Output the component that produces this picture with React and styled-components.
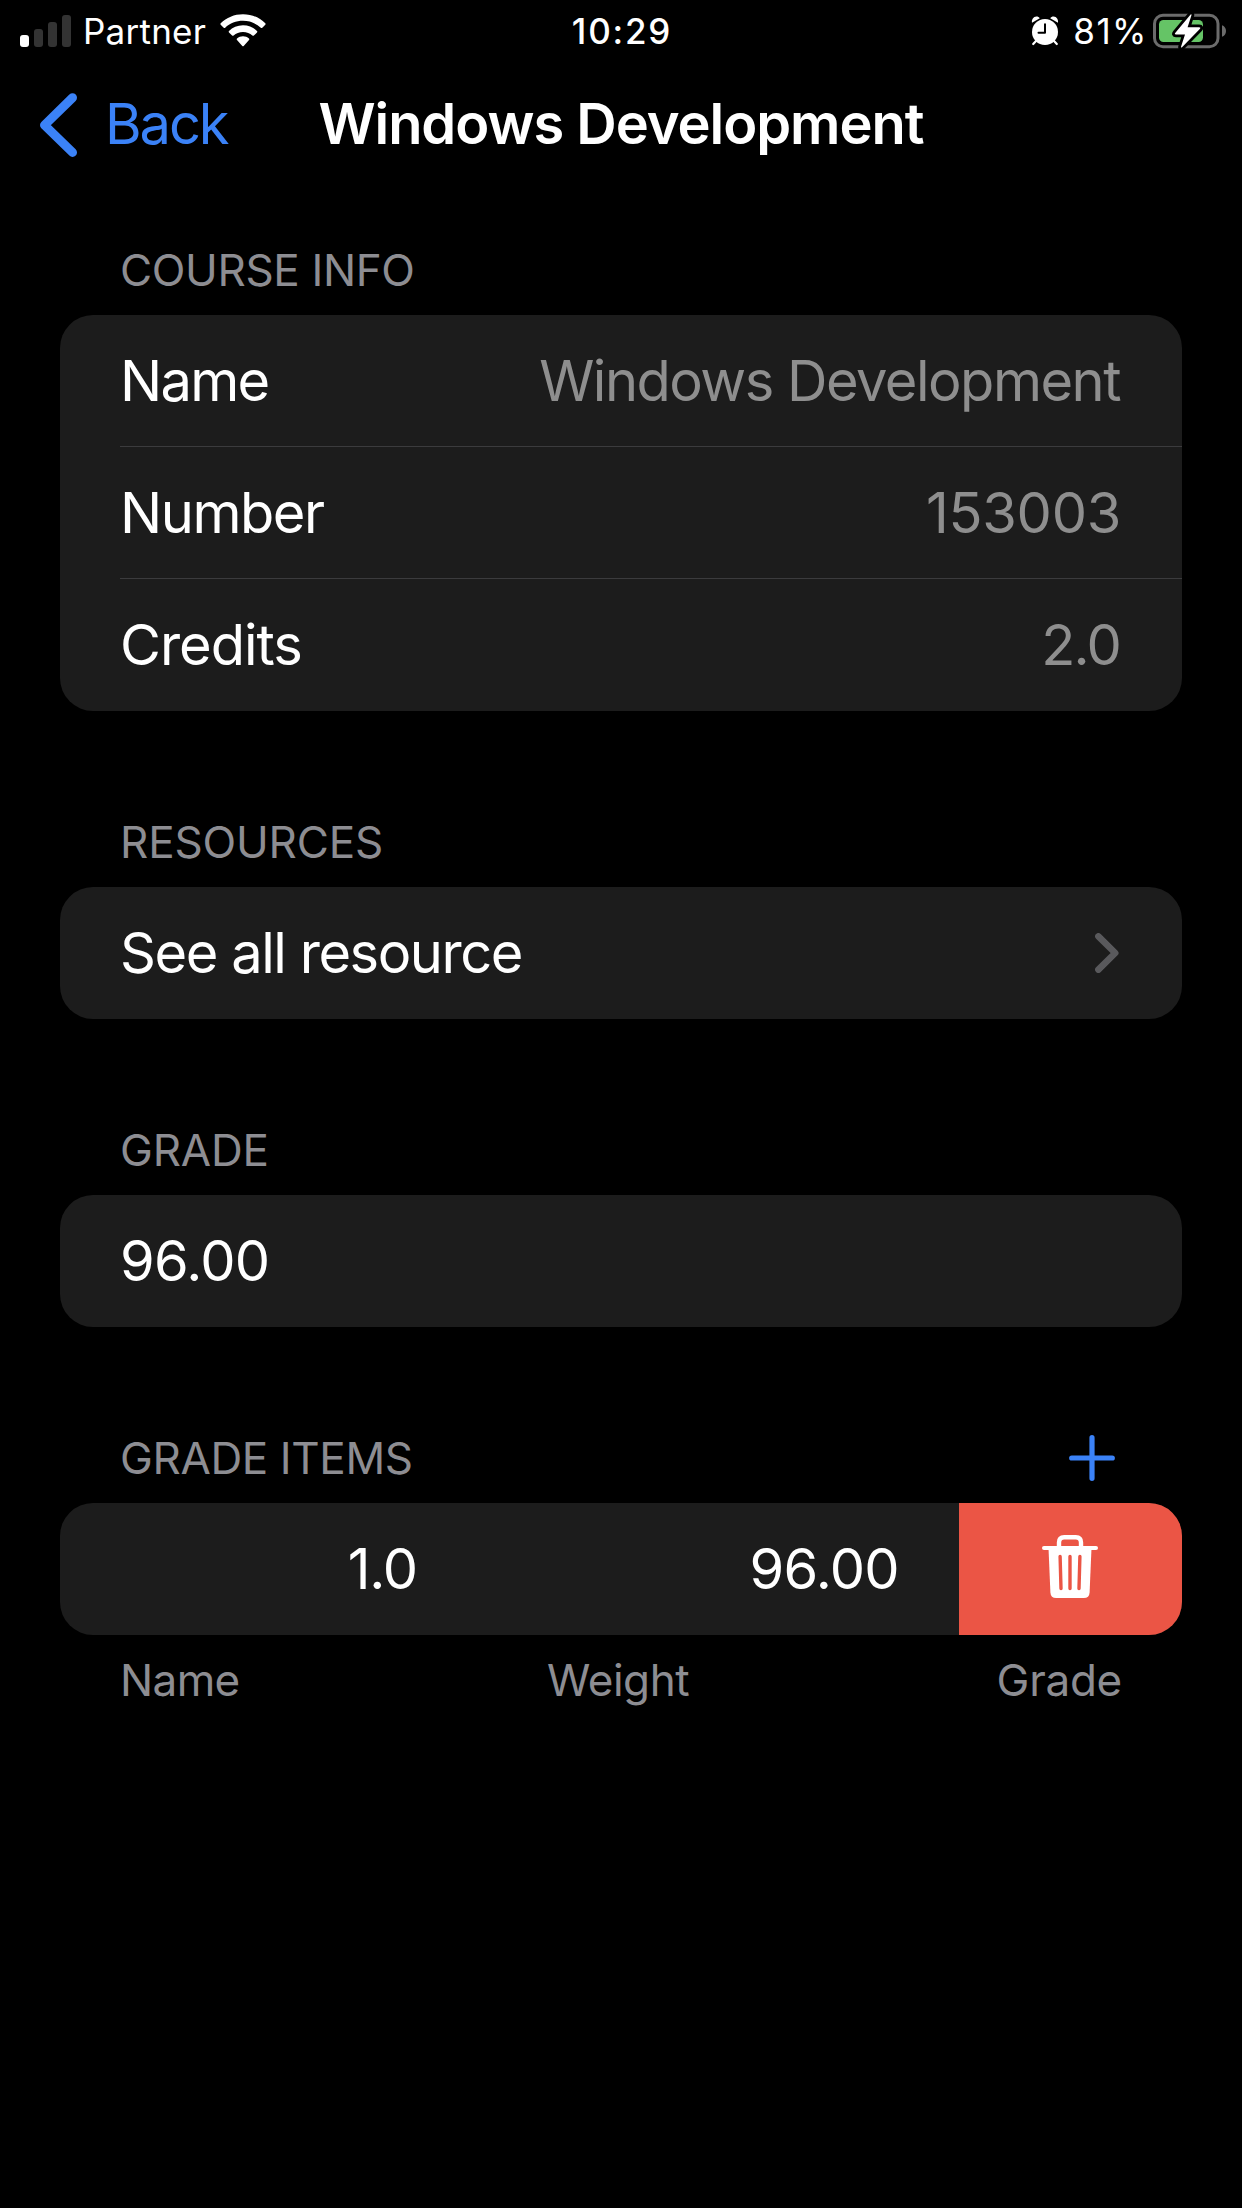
import React from 'react';
import styled, { createGlobalStyle } from 'styled-components';

const color = {
  background: '#000',
  card: '#1c1c1c',
  label: '#fff',
  value: '#8e8e8e',
  secondary: '#8d8d92',
  separator: '#3b3b3d',
  tint: '#3b82f7',
  destructive: '#eb5545',
  battery: '#65c466',
};

const GlobalStyle = createGlobalStyle`
  html, body { margin: 0; background: ${color.background}; }
  *, *::before, *::after { box-sizing: border-box; }
`;

const Screen = styled.main`
  width: 1242px;
  height: 2208px;
  overflow: hidden;
  background: ${color.background};
  color: ${color.label};
  font-family: Inter, 'Liberation Sans', sans-serif;
  font-size: 56px;
  -webkit-font-smoothing: antialiased;
`;

const StatusBar = styled.header`
  display: grid;
  grid-template-columns: 1fr auto 1fr;
  align-items: center;
  height: 62px;
  padding: 0 15px 0 20px;
  font-size: 35px;
  line-height: 62px;
`;

const StatusGroup = styled.div`
  display: flex;
  align-items: center;
  justify-content: ${(p) => (p.$end ? 'flex-end' : 'flex-start')};
  svg { display: block; flex: none; }
`;

const Carrier = styled.span`
  margin: 0 14px 0 12px;
  letter-spacing: 0.25px;
`;

const Clock = styled.time`
  padding-right: 3px;
  font-weight: 500;
  letter-spacing: 1.8px;
`;

const BatteryLevel = styled.span`
  margin: 0 5px 0 14px;
  letter-spacing: 1.5px;
`;

const NavBar = styled.nav`
  display: grid;
  grid-template-columns: 1fr auto 1fr;
  align-items: center;
  height: 123px;
  padding: 2px 39px 0;
`;

const BackButton = styled.button`
  display: flex;
  align-items: center;
  gap: 27px;
  padding: 0;
  border: 0;
  background: none;
  color: ${color.tint};
  font: inherit;
  letter-spacing: -2.1px;
  line-height: 121px;
  svg { display: block; }
`;

const Title = styled.h1`
  margin: 0;
  font-size: 56px;
  font-weight: 600;
  line-height: 121px;
  letter-spacing: -1.04px;
`;

const Content = styled.div`
  display: flex;
  flex-direction: column;
  gap: 109px;
  padding: 63px 60px 0;
`;

const Section = styled.section`
  display: flex;
  flex-direction: column;
`;

const SectionHeader = styled.div`
  display: flex;
  align-items: center;
  justify-content: space-between;
  height: 44px;
  margin: 0 67px 23px 60px;
`;

const SectionTitle = styled.h2`
  margin: 0;
  color: ${color.secondary};
  font-size: 44px;
  font-weight: 400;
  line-height: 44px;
  letter-spacing: ${(p) => p.$tracking}px;
`;

const IconButton = styled.button`
  display: flex;
  padding: 0;
  border: 0;
  background: none;
`;

const Card = styled.div`
  overflow: hidden;
  border-radius: 33px;
  background: ${color.card};
`;

const Row = styled.div`
  display: flex;
  align-items: center;
  justify-content: space-between;
  height: 132px;
  margin-left: 60px;
  padding: ${(p) => (p.$last ? '0' : '1px')} 61px 0 0;
  line-height: 132px;
  border-bottom: ${(p) => (p.$last ? '0' : `1px solid ${color.separator}`)};
`;

const Label = styled.span`
  letter-spacing: ${(p) => p.$tracking}px;
`;

const Value = styled.span`
  margin-right: ${(p) => p.$inset || 0}px;
  color: ${color.value};
  letter-spacing: ${(p) => p.$tracking}px;
`;

const SwipeRow = styled.div`
  display: flex;
  height: 132px;
  line-height: 132px;
`;

const GradeItem = styled.div`
  display: grid;
  flex: 1;
  grid-template-columns: 357px 1fr;
  padding-right: 60px;
  text-align: right;
`;

const DeleteAction = styled.button`
  display: flex;
  justify-content: center;
  width: 223px;
  padding: 32px 2px 0 0;
  border: 0;
  background: ${color.destructive};
`;

const Columns = styled.div`
  display: flex;
  justify-content: space-between;
  margin: 23px 60px 0;
  color: ${color.secondary};
  font-size: 44px;
  line-height: 44px;
`;

const Signal = () => (
  <svg width="51" height="32" viewBox="0 0 51 32">
    <rect x="0" y="20" width="9" height="12" rx="3" fill="#fff" />
    <rect x="14" y="14" width="9" height="18" rx="3" fill="#333" />
    <rect x="28" y="7" width="9" height="25" rx="3" fill="#333" />
    <rect x="42" y="0" width="9" height="32" rx="3" fill="#333" />
  </svg>
);

const Wifi = () => (
  <svg width="46" height="34" viewBox="0 0 46 34" fill="#fff">
    <path d="M23 0.2C31.700 0.200 39.500 3.600 45.300 9.200Q46 10 45.300 10.700L42.300 13.700Q41.500 14.400 40.800 13.700C36.100 9.300 29.900 6.800 23 6.800S9.900 9.300 5.200 13.700Q4.500 14.400 3.700 13.700L0.700 10.700Q0 10 0.700 9.200C6.500 3.600 14.300 0.200 23 0.200Z" />
    <path d="M23 11.300C28.600 11.300 33.400 13.400 37 17Q37.700 17.800 37 18.500L33.900 21.500Q33.200 22.200 32.400 21.500C29.900 19.200 26.700 17.900 23 17.900S16.100 19.200 13.600 21.500Q12.800 22.200 12.100 21.500L9 18.500Q8.300 17.800 9 17C12.600 13.400 17.400 11.300 23 11.300Z" />
    <path d="M23 22.300C25.300 22.300 27.300 23 29 24.500Q29.800 25.300 29 26.100L23.700 31.900Q23 32.600 22.300 31.900L17 26.100Q16.200 25.300 17 24.500C18.700 23 20.700 22.300 23 22.300Z" />
  </svg>
);

const Alarm = () => (
  <svg width="28" height="30" viewBox="0 0 28 30">
    <circle cx="14" cy="16" r="13" fill="#fff" />
    <path d="M1 6.800C0.400 3.700 2.400 0.600 5.400 0.600C6.900 0.600 8 1.200 8.800 2.200ZM27 6.800C27.600 3.700 25.600 0.600 22.600 0.600C21.100 0.600 20 1.200 19.200 2.200Z" fill="#fff" />
    <path d="M5 25L2.200 28M23 25L25.800 28" stroke="#fff" strokeWidth="2.200" strokeLinecap="round" />
    <path d="M14 8.200V16.700H7.500" fill="none" stroke="#000" strokeWidth="2" strokeLinecap="round" strokeLinejoin="round" />
  </svg>
);

const Battery = () => (
  <svg width="74" height="36" viewBox="0 0 74 36">
    <rect x="1.500" y="2.200" width="63.500" height="31.600" rx="8.500" fill="none" stroke="#6b6b6b" strokeWidth="3" />
    <path d="M69 12.200C71.400 13 73 15.200 73 18S71.400 23 69 23.800Z" fill="#6b6b6b" />
    <rect x="6" y="7" width="44" height="22" rx="4.500" fill={color.battery} />
    <path
      d="M37.600 1.600Q38.800 0.500 38.400 2.400L34.600 14.300H46.200Q48.200 14.300 46.800 16L29 34.200Q27.600 35.300 28.100 33.500L32 21.500H23Q21 21.500 22.400 19.800Z"
      fill="#fff"
      stroke="#000"
      strokeWidth="5.600"
      strokeLinejoin="round"
      paintOrder="stroke"
    />
  </svg>
);

const BackChevron = () => (
  <svg width="39" height="64" viewBox="0 0 39 64" fill="none">
    <path d="M33.500 4.700L5.500 32.100L33.500 59.400" stroke={color.tint} strokeWidth="9" strokeLinecap="round" strokeLinejoin="round" />
  </svg>
);

const Disclosure = styled(({ className }) => (
  <svg className={className} width="24" height="40" viewBox="0 0 24 40" fill="none">
    <path d="M3.400 3.400L20.200 20L3.400 36.600" stroke="#59595c" strokeWidth="6.600" strokeLinecap="round" strokeLinejoin="round" />
  </svg>
))`
  display: block;
  margin-right: 2px;
`;

const Plus = () => (
  <svg width="46" height="46" viewBox="0 0 46 46">
    <path d="M23 2.700V43.300M2.700 23H43.300" stroke={color.tint} strokeWidth="5.200" strokeLinecap="round" />
  </svg>
);

const Trash = () => (
  <svg width="56" height="64" viewBox="0 0 56 64">
    <path d="M17 13V7.500Q17 2.200 22.200 2.200H33.800Q39 2.200 39 7.500V13" fill="none" stroke="#fff" strokeWidth="4.400" />
    <path d="M2 13H54" stroke="#fff" strokeWidth="4" strokeLinecap="round" />
    <path d="M6.500 13H49.500L47.600 57.500Q47.300 63 41.800 63H14.200Q8.700 63 8.400 57.500Z" fill="#fff" />
    <path d="M18.100 21.500L19 53.500M28 21.500V53.500M37.900 21.500L37 53.500" stroke={color.destructive} strokeWidth="3.400" strokeLinecap="round" />
  </svg>
);

export default function App() {
  return (
    <Screen>
      <GlobalStyle />
      <StatusBar>
        <StatusGroup>
          <Signal />
          <Carrier>Partner</Carrier>
          <Wifi />
        </StatusGroup>
        <Clock>10:29</Clock>
        <StatusGroup $end>
          <Alarm />
          <BatteryLevel>81%</BatteryLevel>
          <Battery />
        </StatusGroup>
      </StatusBar>

      <NavBar>
        <BackButton type="button">
          <BackChevron />
          Back
        </BackButton>
        <Title>Windows Development</Title>
      </NavBar>

      <Content>
        <Section>
          <SectionHeader>
            <SectionTitle $tracking={-0.35}>COURSE INFO</SectionTitle>
          </SectionHeader>
          <Card>
            <Row>
              <Label $tracking={-1.7}>Name</Label>
              <Value $tracking={-1.5} $inset={1}>Windows Development</Value>
            </Row>
            <Row>
              <Label $tracking={-1.46}>Number</Label>
              <Value $tracking={-0.29}>153003</Value>
            </Row>
            <Row $last>
              <Label $tracking={-1.01}>Credits</Label>
              <Value $tracking={-1.8} $inset={1}>2.0</Value>
            </Row>
          </Card>
        </Section>

        <Section>
          <SectionHeader>
            <SectionTitle $tracking={-0.16}>RESOURCES</SectionTitle>
          </SectionHeader>
          <Card>
            <Row $last>
              <Label $tracking={-1.45}>See all resource</Label>
              <Disclosure />
            </Row>
          </Card>
        </Section>

        <Section>
          <SectionHeader>
            <SectionTitle $tracking={-0.16}>GRADE</SectionTitle>
          </SectionHeader>
          <Card>
            <Row $last>
              <Label $tracking={-0.7}>96.00</Label>
            </Row>
          </Card>
        </Section>

        <Section>
          <SectionHeader>
            <SectionTitle $tracking={-0.37}>GRADE ITEMS</SectionTitle>
            <IconButton type="button" aria-label="Add">
              <Plus />
            </IconButton>
          </SectionHeader>
          <Card>
            <SwipeRow>
              <GradeItem>
                <Label $tracking={-1.2}>1.0</Label>
                <Label $tracking={-0.7}>96.00</Label>
              </GradeItem>
              <DeleteAction type="button" aria-label="Delete">
                <Trash />
              </DeleteAction>
            </SwipeRow>
          </Card>
          <Columns>
            <Label $tracking={-0.6}>Name</Label>
            <Label $tracking={-0.45}>Weight</Label>
            <Label $tracking={-0.25}>Grade</Label>
          </Columns>
        </Section>
      </Content>
    </Screen>
  );
}
